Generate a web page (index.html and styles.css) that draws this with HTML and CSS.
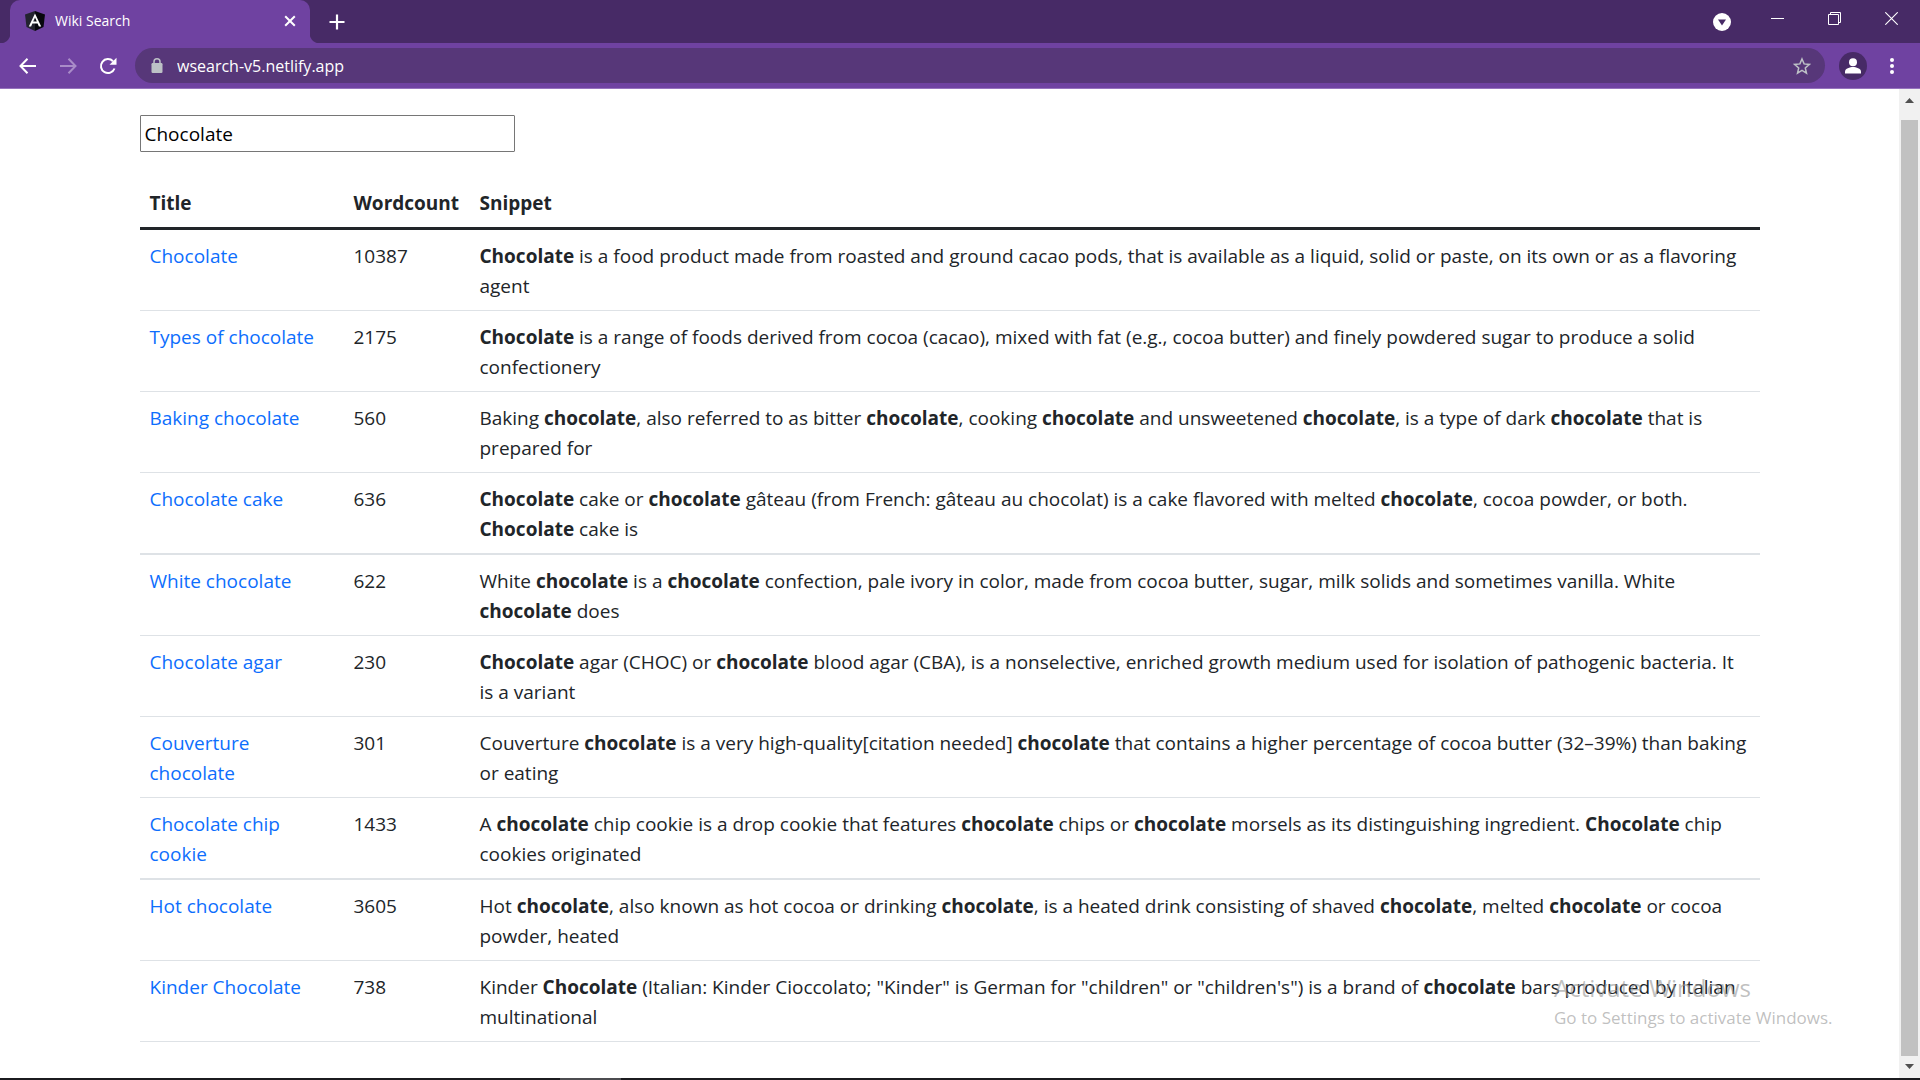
FILE: index.html
```
<!DOCTYPE html>
<html lang="en">
<head>
<meta charset="utf-8">
<meta name="viewport" content="width=device-width, initial-scale=1">
<title>Wiki Search</title>
<link rel="stylesheet" href="styles.css">
</head>
<body>
<div class="window">
  <header class="tabstrip">
    <div class="tab">
      <svg class="favicon" width="20" height="20" viewBox="0 0 20 20" aria-hidden="true"><path d="M10 0 0 3.500l1.500 12.500L10 20z" fill="#23232f"/><path d="M10 0l10 3.500-1.500 12.500L10 20z" fill="#07070d"/><path d="M10 2.500 3.800 15.500h2.300l1.300-3h5.200l1.300 3h2.300zM10 6.600l1.800 4H8.200z" fill="#fff"/></svg>
      <span class="tab-title">Wiki Search</span>
      <button class="tab-close" type="button" aria-label="Close tab"><svg width="12" height="12" viewBox="0 0 12 12"><path d="M1.200 1.200l9.600 9.600M10.800 1.200L1.200 10.800" stroke="#fff" stroke-width="2"/></svg></button>
    </div>
    <button class="new-tab" type="button" aria-label="New tab"><svg width="16" height="16" viewBox="0 0 16 16"><path d="M8 .5v15M.5 8h15" stroke="#fff" stroke-width="2.200"/></svg></button>
    <div class="window-controls">
      <button type="button" class="media" aria-label="Search tabs"><svg width="18" height="18" viewBox="0 0 18 18"><circle cx="9" cy="9" r="9" fill="#fff"/><path d="M5 6.500h8L9 12.500z" fill="#472a66"/></svg></button>
      <button type="button" aria-label="Minimize"><svg width="13" height="13" viewBox="0 0 13 13"><path d="M0 6.500h13" stroke="#fff"/></svg></button>
      <button type="button" aria-label="Restore"><svg width="13" height="13" viewBox="0 0 13 13"><path d="M.5 2.500h10v10H.5zM2.500 2.500v-2h10v10h-2" fill="none" stroke="#fff"/></svg></button>
      <button type="button" aria-label="Close"><svg width="13" height="13" viewBox="0 0 13 13"><path d="M.3.3l12.400 12.400M12.700.3L.3 12.700" stroke="#fff" stroke-width="1.100"/></svg></button>
    </div>
  </header>
  <nav class="toolbar" aria-label="Browser">
    <div class="nav-buttons">
      <button type="button" aria-label="Back"><svg width="18" height="16" viewBox="0 0 18 16"><path d="M17 8H2M8.500.8L1.500 8l7 7.200" fill="none" stroke="#fff" stroke-width="2"/></svg></button>
      <button type="button" aria-label="Forward"><svg width="18" height="16" viewBox="0 0 18 16"><path d="M1 8h15M9.500.8l7 7.200-7 7.200" fill="none" stroke="#a98cc8" stroke-width="2"/></svg></button>
      <button type="button" aria-label="Reload"><svg width="18" height="18" viewBox="0 0 18 18"><path d="M15.500 11.500A7 7 0 1 1 14 4.200" fill="none" stroke="#fff" stroke-width="2"/><path d="M17.500.8v7h-7z" fill="#fff"/></svg></button>
    </div>
    <div class="omnibox">
      <svg width="12" height="16" viewBox="0 0 12 16" aria-hidden="true"><rect x=".5" y="5" width="11" height="10" rx="1.200" fill="#bdc1c6"/><path d="M3 6V3.800a3 3 0 0 1 6 0V6" fill="none" stroke="#bdc1c6" stroke-width="1.500"/></svg>
      <input type="text" class="url" aria-label="Address" value="wsearch-v5.netlify.app">
      <button type="button" aria-label="Bookmark"><svg width="18" height="18" viewBox="0 0 18 18"><path d="M9 2l2.100 4.900 5.200.5-4 3.500 1.200 5.200L9 13.400l-4.500 2.700 1.200-5.200-4-3.500 5.200-.5z" fill="none" stroke="#bdc1c6" stroke-width="1.500"/></svg></button>
    </div>
    <button type="button" class="profile" aria-label="Profile"><svg width="28" height="28" viewBox="0 0 28 28"><circle cx="14" cy="14" r="14" fill="#472a66"/><circle cx="14" cy="10.200" r="4" fill="#fff"/><path d="M6 21.500v-2c0-3 5-4.500 8-4.500s8 1.500 8 4.500v2z" fill="#fff"/></svg></button>
    <button type="button" class="menu" aria-label="Menu"><svg width="4" height="16" viewBox="0 0 4 16"><g fill="#fff"><circle cx="2" cy="2" r="2"/><circle cx="2" cy="8" r="2"/><circle cx="2" cy="14" r="2"/></g></svg></button>
  </nav>
  <div class="viewport">
    <main class="page">
      <div class="container">
        <input class="search" type="text" aria-label="Search term" value="Chocolate">
        <table class="results">
          <colgroup><col class="col-title"><col class="col-count"><col></colgroup>
          <thead><tr><th scope="col">Title</th><th scope="col">Wordcount</th><th scope="col">Snippet</th></tr></thead>
          <tbody>
            <tr><td><a href="#">Chocolate</a></td><td>10387</td><td><b>Chocolate</b> is a food product made from roasted and ground cacao pods, that is available as a liquid, solid or paste, on its own or as a flavoring agent</td></tr>
            <tr><td><a href="#">Types of chocolate</a></td><td>2175</td><td><b>Chocolate</b> is a range of foods derived from cocoa (cacao), mixed with fat (e.g., cocoa butter) and finely powdered sugar to produce a solid confectionery</td></tr>
            <tr><td><a href="#">Baking chocolate</a></td><td>560</td><td>Baking <b>chocolate</b>, also referred to as bitter <b>chocolate</b>, cooking <b>chocolate</b> and unsweetened <b>chocolate</b>, is a type of dark <b>chocolate</b> that is prepared for</td></tr>
            <tr><td><a href="#">Chocolate cake</a></td><td>636</td><td><b>Chocolate</b> cake or <b>chocolate</b> gâteau (from French: gâteau au chocolat) is a cake flavored with melted <b>chocolate</b>, cocoa powder, or both. <b>Chocolate</b> cake is</td></tr>
            <tr><td><a href="#">White chocolate</a></td><td>622</td><td>White <b>chocolate</b> is a <b>chocolate</b> confection, pale ivory in color, made from cocoa butter, sugar, milk solids and sometimes vanilla. White <b>chocolate</b> does</td></tr>
            <tr><td><a href="#">Chocolate agar</a></td><td>230</td><td><b>Chocolate</b> agar (CHOC) or <b>chocolate</b> blood agar (CBA), is a nonselective, enriched growth medium used for isolation of pathogenic bacteria. It is a variant</td></tr>
            <tr><td><a href="#">Couverture chocolate</a></td><td>301</td><td>Couverture <b>chocolate</b> is a very high-quality[citation needed] <b>chocolate</b> that contains a higher percentage of cocoa butter (32–39%) than baking or eating</td></tr>
            <tr><td><a href="#">Chocolate chip cookie</a></td><td>1433</td><td>A <b>chocolate</b> chip cookie is a drop cookie that features <b>chocolate</b> chips or <b>chocolate</b> morsels as its distinguishing ingredient. <b>Chocolate</b> chip cookies originated</td></tr>
            <tr><td><a href="#">Hot chocolate</a></td><td>3605</td><td>Hot <b>chocolate</b>, also known as hot cocoa or drinking <b>chocolate</b>, is a heated drink consisting of shaved <b>chocolate</b>, melted <b>chocolate</b> or cocoa powder, heated</td></tr>
            <tr><td><a href="#">Kinder Chocolate</a></td><td>738</td><td>Kinder <b>Chocolate</b> (Italian: Kinder Cioccolato; "Kinder" is German for "children" or "children's") is a brand of <b>chocolate</b> bars produced by Italian multinational</td></tr>
          </tbody>
        </table>
      </div>
    </main>
    <div class="scrollbar" aria-hidden="true">
      <svg width="9" height="5" viewBox="0 0 9 5"><path d="M0 5l4.500-5L9 5z" fill="#505050"/></svg>
      <div class="thumb"></div>
      <svg width="9" height="5" viewBox="0 0 9 5"><path d="M0 0l4.500 5L9 0z" fill="#505050"/></svg>
    </div>
  </div>
  <footer class="taskbar"><div class="taskbar-active"></div></footer>
  <div class="watermark"><p class="watermark-title">Activate Windows</p><p class="watermark-text">Go to Settings to activate Windows.</p></div>
</div>
</body>
</html>
```
FILE: styles.css
```
* { box-sizing: border-box; }
body {
  margin: 0;
  background: #fff;
  color: #212529;
  font: 19px/30px "Open Sans", "Noto Sans", sans-serif;
}
button {
  display: flex;
  align-items: center;
  justify-content: center;
  padding: 0;
  border: 0;
  background: none;
}
input { font-family: inherit; }
.window {
  position: relative;
  display: flex;
  flex-direction: column;
  min-height: 100vh;
}

/* Tab strip */
.tabstrip {
  display: flex;
  height: 43px;
  padding-left: 10px;
  background: #472a66;
}
.tab {
  position: relative;
  display: flex;
  align-items: center;
  width: 300px;
  padding: 0 14px 1px 15px;
  border-radius: 10px 10px 0 0;
  background: #6f42a1;
}
.tab::before, .tab::after {
  content: "";
  position: absolute;
  bottom: 0;
  width: 10px;
  height: 10px;
}
.tab::before { right: 100%; background: radial-gradient(circle at 0 0, #472a66 10px, #6f42a1 11px); }
.tab::after { left: 100%; background: radial-gradient(circle at 100% 0, #472a66 10px, #6f42a1 11px); }
.tab-title {
  flex: 1;
  margin-left: 10px;
  color: #fff;
  font-size: 14px;
  line-height: 20px;
}
.new-tab { width: 54px; }
.window-controls {
  display: flex;
  align-items: flex-start;
  margin-left: auto;
}
.window-controls button { width: 57px; height: 37px; }
.window-controls .media { width: 54px; height: 43px; }

/* Toolbar */
.toolbar {
  display: flex;
  align-items: center;
  height: 46px;
  padding-right: 13px;
  border-bottom: 1px solid #9673bd;
  background: #6f42a1;
}
.nav-buttons {
  display: flex;
  padding: 0 7px 0 8px;
}
.nav-buttons button { width: 40px; height: 36px; }
.omnibox {
  display: flex;
  flex: 1;
  align-items: center;
  height: 35px;
  padding: 0 14px 0 16px;
  border-radius: 18px;
  background: #573779;
}
.url {
  flex: 1;
  min-width: 0;
  height: 30px;
  margin-left: 14px;
  padding: 0;
  border: 0;
  background: none;
  color: #fff;
  font-size: 16px;
}
.profile { margin-left: 14px; }
.menu { width: 30px; height: 36px; margin-left: 10px; }

/* Page */
.viewport { display: flex; flex: 1; }
.page { flex: 1; min-width: 0; }
.container {
  max-width: 1650px;
  margin: 0 auto;
  padding: 26px 15px 0;
}
.search {
  display: block;
  width: 375px;
  height: 37px;
  max-width: 100%;
  margin-bottom: 25px;
  padding: 0 4px;
  border: 1px solid #767676;
  border-radius: 1px;
  color: #000;
  font-size: 19px;
}
.results {
  width: 100%;
  table-layout: fixed;
  border-spacing: 0;
}
.col-title { width: 204px; }
.col-count { width: 126px; }
.results th, .results td {
  padding: 11px 10px 9px;
  text-align: left;
  vertical-align: top;
}
.results th { border-bottom: 3px solid #212529; }
.results td { border-bottom: 1px solid #dee2e6; }
.results tbody tr:nth-child(4n) td { border-bottom-width: 2px; }
a { color: #0d6efd; text-decoration: none; }

/* Scrollbar */
.scrollbar {
  display: flex;
  flex-direction: column;
  align-items: center;
  width: 21px;
  padding: 9px 0;
  background: #f1f1f1;
}
.thumb {
  flex: 1;
  width: 17px;
  margin: 17px 0 8px;
  background: #c1c1c1;
}

/* Taskbar edge and system watermark */
.taskbar {
  height: 2px;
  padding-left: 560px;
  background: #1b1b1f;
}
.taskbar-active { width: 61px; height: 2px; background: #4c4c50; }
.watermark {
  position: absolute;
  right: 82px;
  bottom: 47px;
  width: 284px;
  color: rgba(150, 150, 150, .6);
  pointer-events: none;
}
.watermark p { margin: 0; }
.watermark-title { font-size: 24px; }
.watermark-text { font-size: 17px; }
```
